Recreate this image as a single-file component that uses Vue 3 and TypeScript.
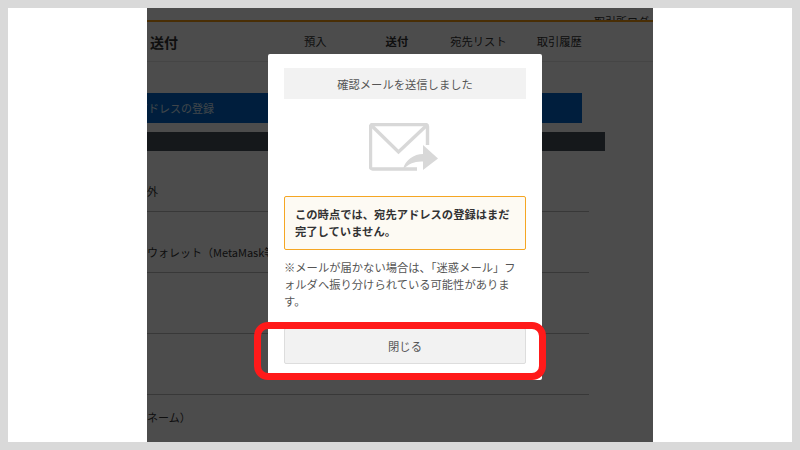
<script setup lang="ts">
const nav = [
  { label: '預入', active: false },
  { label: '送付', active: true },
  { label: '宛先リスト', active: false },
  { label: '取引履歴', active: false },
]
const rows = [
  { label: '口座外', cls: 'row-a' },
  { label: '外部ウォレット（MetaMask等）', cls: 'row-a' },
  { label: '', cls: 'row-a' },
  { label: '', cls: 'row-a' },
  { label: '名（ネーム）', cls: 'row-b' },
]
</script>

<template>
  <div class="frame">
    <div class="sheet">
      <div class="page">
        <div class="topbar"><span class="toplink">取引所ログ</span></div>
        <header class="head">
          <h1 class="title">送付</h1>
          <nav class="nav">
            <span v-for="n in nav" :key="n.label" class="nav-item" :class="{ active: n.active }">{{ n.label }}</span>
          </nav>
        </header>
        <section class="card">
          <div class="blue"><span>宛先アドレスの登録</span></div>
          <div class="black"></div>
          <div v-for="(r, i) in rows" :key="i" class="row" :class="r.cls">{{ r.label }}</div>
        </section>

        <div class="overlay"></div>
        <div class="modal">
          <div class="modal-title">確認メールを送信しました</div>
          <div class="icon-wrap">
            <svg width="72" height="50" viewBox="0 0 72 50" fill="none">
              <path d="M48 46H3.5a2 2 0 0 1-2-2V3.5a2 2 0 0 1 2-2h53a2 2 0 0 1 2 2V22" stroke="#d8d8d8" stroke-width="3.4" stroke-linejoin="round" />
              <path d="M3 3l26.5 26L57 3" stroke="#d8d8d8" stroke-width="3.4" />
              <path d="M34 46.5C36 37 45 31 54 31V22l15 13.5L54 47V38.5C46 38 39 41 34 46.5Z" fill="#d8d8d8" />
            </svg>
          </div>
          <div class="alert">この時点では、宛先アドレスの登録はまだ完了していません。</div>
          <p class="note">※メールが届かない場合は、「迷惑メール」フォルダへ振り分けられている可能性があります。</p>
          <button class="close" type="button">閉じる</button>
        </div>
      </div>
      <div class="marker"></div>
    </div>
  </div>
</template>

<style>
html, body { margin: 0; padding: 0; background: #d9d9d9; }
</style>

<style scoped>
.frame {
  width: 800px;
  height: 450px;
  box-sizing: border-box;
  padding: 8px;
  background: #d9d9d9;
  font-family: "Noto Sans CJK JP", "Noto Sans", sans-serif;
}
.sheet {
  position: relative;
  height: 434px;
  background: #fff;
  display: flex;
  justify-content: center;
}
.page {
  position: relative;
  width: 506px;
  height: 434px;
  overflow: hidden;
  background: #fff;
  color: #333;
  font-size: 11.3px;
  line-height: 17px;
}
.topbar {
  height: 12px;
  border-bottom: 2px solid #f39c12;
  display: flex;
  justify-content: flex-end;
  align-items: flex-end;
  padding-right: 4px;
  overflow: hidden;
}
.toplink { font-size: 11px; line-height: 12px; transform: translateY(7px); }
.head {
  height: 39px;
  padding-left: 3px;
  display: flex;
  align-items: center;
  border-bottom: 1px solid #e6e6e6;
}
.title { margin: 0; font-size: 14px; font-weight: 700; line-height: 20px; width: 154px; }
.nav { display: flex; gap: 0; }
.nav-item { font-size: 11.3px; margin-right: 59px; }
.nav-item:nth-child(2) { margin-right: 42px; }
.nav-item:nth-child(3) { margin-right: 30px; }
.active { font-weight: 700; }
.card {
  margin: 7px 0 0 -80px;
  width: 538px;
  background: #fff;
  padding-top: 24px;
}
.blue {
  margin: 0 23px 0 0;
  height: 30px;
  background: #0067cb;
  color: #d8e8f8;
  display: flex;
  align-items: center;
  padding-left: 48px;
  font-size: 11px;
}
.black { margin-top: 9px; height: 19px; background: #46505a; }
.row {
  margin-right: 16px;
  margin-left: 58px;
  height: 60px;
  box-sizing: content-box;
  border-bottom: 1px solid #bbb;
  padding-left: 0;
  white-space: nowrap;
  font-size: 11px;
}
.row-a { padding-top: 0; line-height: 80px; }
.row-b { line-height: 44px; }
.overlay {
  position: absolute;
  inset: 0;
  background: rgba(0, 0, 0, 0.7);
}
.modal {
  position: absolute;
  left: 121px;
  top: 46px;
  width: 274px;
  height: 326px;
  box-sizing: border-box;
  padding: 14px 16px;
  background: #fff;
  border-radius: 2px;
  color: #555;
  display: flex;
  flex-direction: column;
}
.modal-title {
  height: 31px;
  background: #f2f2f2;
  text-align: center;
  line-height: 33px;
  font-size: 11.3px;
}
.icon-wrap {
  height: 97px;
  display: flex;
  align-items: center;
  justify-content: center;
  padding-top: 0;
}
.alert {
  height: 54px;
  box-sizing: border-box;
  border: 1px solid #f5a623;
  border-radius: 2px;
  background: #fdfaf3;
  padding: 9px 10px;
  font-weight: 700;
  color: #333;
  font-size: 11.3px;
  line-height: 17px;
}
.note {
  margin: 9px 0 0;
  font-size: 11.3px;
  line-height: 17px;
}
.close {
  margin-top: 18px;
  height: 36px;
  background: #f2f2f2;
  border: 1px solid #ddd;
  border-radius: 2px;
  color: #555;
  font: inherit;
  font-size: 11.3px;
}
.marker {
  position: absolute;
  left: 246px;
  top: 314px;
  width: 292px;
  height: 58px;
  box-sizing: border-box;
  border: 7px solid #ff1a1a;
  border-radius: 14px;
}
</style>
